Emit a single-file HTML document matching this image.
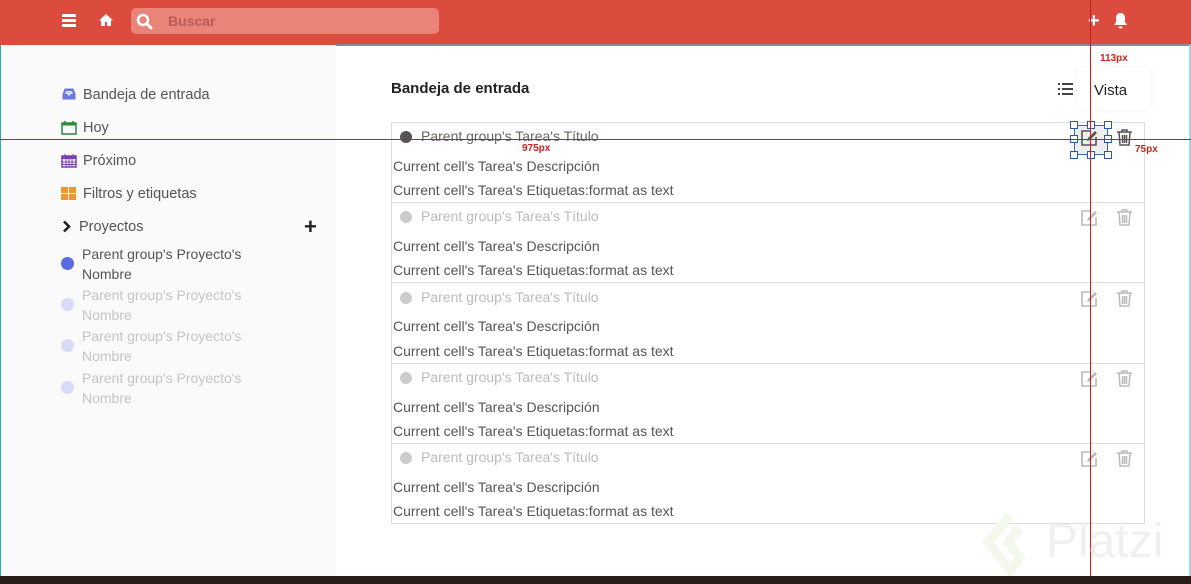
<!DOCTYPE html>
<html><head><meta charset="utf-8"><style>
*{margin:0;padding:0;box-sizing:border-box}
body{width:1191px;height:584px;overflow:hidden;background:#fff;font-family:"Liberation Sans",sans-serif;position:relative;color:#444}
.a{position:absolute}
.hdr{left:0;top:0;width:1191px;height:45px;background:#dc4c3e}
.side{left:2px;top:45px;width:334px;height:531px;background:#fafafa}
.nav{left:83px;font-size:14.5px;color:#555;white-space:nowrap}
.proj{left:82px;font-size:14px;line-height:20px;width:200px}
.dot{width:13px;height:13px;border-radius:50%}
.row{left:391px;width:754px;height:81px;border:1px solid #ddd;border-bottom:none}
.t{left:29px;top:5px;font-size:14px;color:#bbb}
.d{left:1px;font-size:14px;color:#555}
.rl{background:#c81e1e}
.lab{font:bold 10px "Liberation Sans",sans-serif;color:#d02020}
</style></head><body>
<div class="a hdr"></div>
<div class="a" style="left:336px;top:44px;width:855px;height:2px;background:#8a8a90"></div>
<div class="a" style="left:62px;top:14px;width:14px;height:3px;background:#fff;box-shadow:0 5px 0 #fff,0 10px 0 #fff"></div>
<svg class="a" style="left:98px;top:13px" width="16" height="14" viewBox="0 0 16 14"><path d="M8 1L1 7.5h2V13h4V9h2v4h4V7.5h2z" fill="#fff"/></svg>
<div class="a" style="left:131px;top:8px;width:308px;height:26px;background:#ea8378;border-radius:5px"></div>
<svg class="a" style="left:136px;top:13px" width="17" height="17" viewBox="0 0 17 17"><circle cx="7" cy="7" r="5" stroke="#fff" stroke-width="2.6" fill="none"/><path d="M10.5 10.5L15 15" stroke="#fff" stroke-width="3" stroke-linecap="round"/></svg>
<div class="a" style="left:168px;top:13px;font-size:14px;font-weight:bold;color:#b85a55">Buscar</div>
<div class="a" style="left:1088px;top:14px;font-size:20px;font-weight:bold;color:#fff;line-height:14px">+</div>
<svg class="a" style="left:1113px;top:12px" width="15" height="17" viewBox="0 0 15 17"><path d="M7.5 1C4.5 1 3 3.5 3 6v4L1 13h13l-2-3V6c0-2.5-1.5-5-4.5-5zM5.5 14.5a2 2 0 0 0 4 0z" fill="#fff"/></svg>
<div class="a side"></div>
<div class="a" style="left:0;top:45px;width:1px;height:531px;background:#2aa8c0"></div>
<div class="a" style="left:1189px;top:45px;width:2px;height:531px;background:#9cdcea"></div>
<svg class="a" style="left:62px;top:88px" width="14" height="12" viewBox="0 0 14 12"><path d="M1 6L3 1h8l2 5v5H1z M1 6h4l1 2h2l1-2h4" fill="#6a78e0" stroke="#6a78e0"/><path d="M3 6l1-3h6l1 3" fill="#fff" opacity=".7"/></svg>
<div class="a nav" style="top:87px">Bandeja de entrada</div>
<svg class="a" style="left:61px;top:120px" width="16" height="15" viewBox="0 0 16 15"><rect x="1" y="3" width="14" height="11" fill="none" stroke="#2a8a3a" stroke-width="1.5"/><rect x="1" y="3" width="14" height="2.5" fill="#2a8a3a"/><path d="M4 1v4M12 1v4" stroke="#2a8a3a" stroke-width="1.5"/></svg>
<div class="a nav" style="top:120px">Hoy</div>
<svg class="a" style="left:61px;top:153px" width="16" height="15" viewBox="0 0 16 15"><rect x="1" y="3" width="14" height="11" fill="none" stroke="#7a3fae" stroke-width="1.5"/><rect x="1" y="3" width="14" height="3" fill="#7a3fae"/><path d="M4 1v4M12 1v4M1 9h14M1 11.5h14M5 6v8M8 6v8M11 6v8" stroke="#7a3fae" stroke-width="1"/></svg>
<div class="a nav" style="top:153px">Próximo</div>
<svg class="a" style="left:61px;top:187px" width="15" height="13" viewBox="0 0 15 13"><rect x="0" y="0" width="7" height="6" fill="#f0962a"/><rect x="8" y="0" width="7" height="6" fill="#f0962a"/><rect x="0" y="7" width="7" height="6" fill="#f0962a"/><rect x="8" y="7" width="7" height="6" fill="#f0962a"/></svg>
<div class="a nav" style="top:186px">Filtros y etiquetas</div>
<svg class="a" style="left:62px;top:220px" width="9" height="13" viewBox="0 0 9 13"><path d="M2 1.5l5 5-5 5" stroke="#222" stroke-width="2.6" fill="none"/></svg>
<div class="a nav" style="left:79px;top:219px">Proyectos</div>
<div class="a" style="left:304px;top:214px;font-size:22px;font-weight:bold;color:#222">+</div>
<div class="a dot" style="left:61px;top:257px;background:#5a6ae0"></div>
<div class="a proj" style="top:244px;color:#555">Parent group's Proyecto's Nombre</div>
<div class="a dot" style="left:61px;top:298px;background:#d8daf6"></div>
<div class="a proj" style="top:285px;color:#c4c4c4">Parent group's Proyecto's Nombre</div>
<div class="a dot" style="left:61px;top:339px;background:#d8daf6"></div>
<div class="a proj" style="top:326px;color:#c4c4c4">Parent group's Proyecto's Nombre</div>
<div class="a dot" style="left:61px;top:381px;background:#d8daf6"></div>
<div class="a proj" style="top:368px;color:#c4c4c4">Parent group's Proyecto's Nombre</div>

<div class="a" style="left:391px;top:80px;font-size:15px;font-weight:bold;color:#222">Bandeja de entrada</div>
<div class="a" style="left:1078px;top:68px;width:72px;height:42px;background:#fff;box-shadow:0 0 6px #f2f2f2"></div>
<svg class="a" style="left:1058px;top:83px" width="15" height="12" viewBox="0 0 15 12"><path d="M0 1h2M4 1h11M0 6h2M4 6h11M0 11h2M4 11h11" stroke="#444" stroke-width="2"/></svg>
<div class="a" style="left:1094px;top:82px;font-size:15px;color:#222">Vista</div>

<div class="a row" style="top:122px"><div class="a dot" style="left:8px;top:8px;background:#555;width:12px;height:12px"></div><div class="a t" style="color:#666">Parent group's Tarea's Título</div><div class="a d" style="top:35px">Current cell's Tarea's Descripción</div><div class="a d" style="top:59px">Current cell's Tarea's Etiquetas:format as text</div></div>
<div class="a row" style="top:202px"><div class="a dot" style="left:8px;top:8px;background:#ccc;width:12px;height:12px"></div><div class="a t">Parent group's Tarea's Título</div><div class="a d" style="top:35px">Current cell's Tarea's Descripción</div><div class="a d" style="top:59px">Current cell's Tarea's Etiquetas:format as text</div></div>
<div class="a row" style="top:282px"><div class="a dot" style="left:8px;top:9px;background:#ccc;width:12px;height:12px"></div><div class="a t" style="top:6px">Parent group's Tarea's Título</div><div class="a d" style="top:35px">Current cell's Tarea's Descripción</div><div class="a d" style="top:60px">Current cell's Tarea's Etiquetas:format as text</div></div>
<div class="a row" style="top:363px"><div class="a dot" style="left:8px;top:8px;background:#ccc;width:12px;height:12px"></div><div class="a t">Parent group's Tarea's Título</div><div class="a d" style="top:35px">Current cell's Tarea's Descripción</div><div class="a d" style="top:59px">Current cell's Tarea's Etiquetas:format as text</div></div>
<div class="a row" style="top:443px;height:81px;border-bottom:1px solid #ddd"><div class="a dot" style="left:8px;top:8px;background:#ccc;width:12px;height:12px"></div><div class="a t">Parent group's Tarea's Título</div><div class="a d" style="top:35px">Current cell's Tarea's Descripción</div><div class="a d" style="top:59px">Current cell's Tarea's Etiquetas:format as text</div></div>

<svg width="0" height="0" style="position:absolute"><defs>
<g id="ed"><path d="M12 3H3v14h14V9" fill="none" stroke="currentColor" stroke-width="1.6"/><path d="M8 13l1-3 7-7 2 2-7 7z" fill="currentColor"/></g>
<g id="tr"><path d="M1 4h15M6 4V2h5v2M3 4l1 13h9l1-13M6.5 7v8M8.5 7v8M10.5 7v8" fill="none" stroke="currentColor" stroke-width="1.5"/></g>
</defs></svg>
<div class="a" style="left:1074px;top:125px;width:34px;height:30px;background:#eee"></div>
<svg class="a" style="left:1079px;top:128px;color:#555" width="20" height="20"><use href="#ed"/></svg>
<svg class="a" style="left:1116px;top:128px;color:#555" width="18" height="20"><use href="#tr"/></svg>
<svg class="a" style="left:1079px;top:208px;color:#bbb" width="20" height="20"><use href="#ed"/></svg>
<svg class="a" style="left:1116px;top:208px;color:#bbb" width="18" height="20"><use href="#tr"/></svg>
<svg class="a" style="left:1079px;top:289px;color:#bbb" width="20" height="20"><use href="#ed"/></svg>
<svg class="a" style="left:1116px;top:289px;color:#bbb" width="18" height="20"><use href="#tr"/></svg>
<svg class="a" style="left:1079px;top:369px;color:#bbb" width="20" height="20"><use href="#ed"/></svg>
<svg class="a" style="left:1116px;top:369px;color:#bbb" width="18" height="20"><use href="#tr"/></svg>
<svg class="a" style="left:1079px;top:449px;color:#bbb" width="20" height="20"><use href="#ed"/></svg>
<svg class="a" style="left:1116px;top:449px;color:#bbb" width="18" height="20"><use href="#tr"/></svg>

<div class="a" style="left:1074px;top:125px;width:34px;height:30px;border:1px solid #3a6ab0"></div>
<div class="a" style="left:1070px;top:121px;width:8px;height:8px;border:1px solid #2a5aa8;background:#fff"></div>
<div class="a" style="left:1104px;top:121px;width:8px;height:8px;border:1px solid #2a5aa8;background:#fff"></div>
<div class="a" style="left:1087px;top:121px;width:8px;height:8px;border:1px solid #2a5aa8;background:#fff"></div>
<div class="a" style="left:1070px;top:135px;width:8px;height:8px;border:1px solid #2a5aa8;background:#fff"></div>
<div class="a" style="left:1104px;top:135px;width:8px;height:8px;border:1px solid #2a5aa8;background:#fff"></div>
<div class="a" style="left:1070px;top:151px;width:8px;height:8px;border:1px solid #2a5aa8;background:#fff"></div>
<div class="a" style="left:1087px;top:151px;width:8px;height:8px;border:1px solid #2a5aa8;background:#fff"></div>
<div class="a" style="left:1104px;top:151px;width:8px;height:8px;border:1px solid #2a5aa8;background:#fff"></div>

<div class="a rl" style="left:0;top:139px;width:1191px;height:1px;background:#c0202a"></div>
<div class="a rl" style="left:1090px;top:0;width:1px;height:576px"></div>
<div class="a lab" style="left:1100px;top:53px">113px</div>
<div class="a lab" style="left:522px;top:143px">975px</div>
<div class="a lab" style="left:1135px;top:144px">75px</div>

<svg class="a" style="left:980px;top:512px" width="60" height="64" viewBox="0 0 60 64"><path d="M30 4L8 30l22 28 10-12-12-16 12-14" fill="none" stroke="#f3f8ec" stroke-width="9"/></svg>
<div class="a" style="left:1046px;top:514px;font-size:48px;color:#f0f0f0">Platzi</div>
<div class="a" style="left:0;top:576px;width:1191px;height:8px;background:#2a1c16"></div>
</body></html>
